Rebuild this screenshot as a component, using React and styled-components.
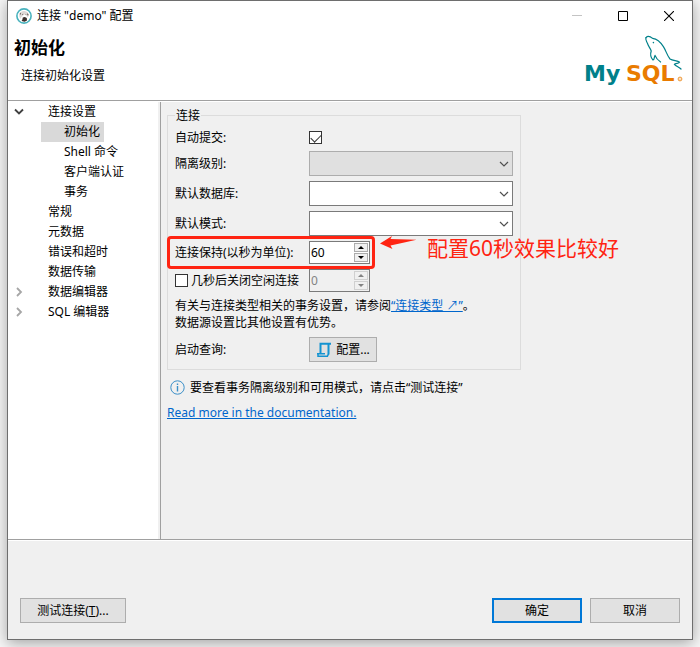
import React, { useState } from 'react';
import styled, { createGlobalStyle } from 'styled-components'

const FONT = '"Noto Sans", "Noto Sans CJK SC", sans-serif'

const TREE = [
    { id: 'conn', label: '连接设置', arrow: 'open', level: 0 },
    { id: 'init', label: '初始化', level: 1 },
    { id: 'shell', label: 'Shell 命令', level: 1 },
    { id: 'auth', label: '客户端认证', level: 1 },
    { id: 'tx', label: '事务', level: 1 },
    { id: 'general', label: '常规', level: 0 },
    { id: 'meta', label: '元数据', level: 0 },
    { id: 'errors', label: '错误和超时', level: 0 },
    { id: 'transfer', label: '数据传输', level: 0 },
    { id: 'dataeditor', label: '数据编辑器', arrow: 'closed', level: 0 },
    { id: 'sqleditor', label: 'SQL 编辑器', arrow: 'closed', level: 0 },
]

const AppIcon = () => (
    <svg width="16" height="16" viewBox="0 0 16 16" aria-hidden="true">
        <circle cx="8" cy="8" r="7.1" fill="#fff" stroke="#48b2bd" strokeWidth="1.6" />
        <path d="M3.2 6.4C3.8 4 6 2.8 8.4 3C11 3.2 12.8 5 12.8 7.4L11.6 9.6L10.4 7.4L8.6 6.4L7 7.6L5 9.6L4.6 11L3.4 9Z" fill="#ddd8d6" />
        <path d="M6.8 9.6L8.8 9L10.8 10L11 12.6L8.6 13.8L5.6 13L6.4 11.4Z" fill="#3b302d" />
        <path d="M3.6 6L5 4.6L4.6 6.8Z M11 5L12.8 7L11.6 7.6Z M6 6.2L7.2 5.8L7 7Z M9.4 6.2L10.4 6.4L10 7.2Z" fill="#4b403c" />
    </svg>
)

const MySqlLogo = () => (
    <svg width="100" height="56" viewBox="0 0 100 56" role="img" aria-label="MySQL">
        <g fill="none" stroke="#00808a" strokeWidth="1.2" strokeLinejoin="round" strokeLinecap="round">
            <path d="M62 2.6C63.6 0.8 66.4 1.6 68.6 3.4C73 4 76.8 7.6 79.4 11.6C82 15.6 83 20.4 86 24C89 25.8 93.4 25.6 95.6 27.2C95.2 28.8 91.4 28 90.4 29.4C92 31.4 95 32 97 34" />
            <path d="M62 2.6C61 4.6 62.6 6.2 63.4 8.2C64 11 66.4 13 67.2 16C66.2 19 66.8 22.6 69 25C70.4 25.2 70 22.4 71 20.4C72 23 74 25.4 76.6 27" />
        </g>
        <circle cx="69.4" cy="7.6" r="0.8" fill="#00808a" />
        <LogoText x="0" y="46" fill="#00808a">My</LogoText>
        <LogoText x="42" y="46" fill="#e97b00">SQL</LogoText>
        <circle cx="96" cy="44" r="1.9" fill="none" stroke="#e97b00" strokeWidth="0.8" />
        <circle cx="96" cy="44" r="0.6" fill="#e97b00" />
    </svg>
)

const Chevron = () => (
    <svg width="10" height="6" viewBox="0 0 10 6" aria-hidden="true">
        <path d="M1 1L5 5L9 1" fill="none" stroke="#505050" strokeWidth="1.2" />
    </svg>
)

const ComboBox = ({ id, disabled }) => (
    <Combo>
        <select id={id} disabled={disabled} defaultValue="">
            <option value=""></option>
        </select>
        <Chevron />
    </Combo>
)

const SpinBox = ({ id, label, initial, disabled }) => {
    const [value, setValue] = useState(initial)
    return (
        <Spin $disabled={disabled}>
            <input id={id} type="number" aria-label={label} value={value} disabled={disabled} onChange={(e) => setValue(e.target.value)} />
            <SpinArrows>
                <SpinButton type="button" aria-label="增加" disabled={disabled} onClick={() => setValue(Number(value) + 1)}>
                    <svg width="6" height="3" viewBox="0 0 6 3"><path d="M0 3L3 0L6 3Z" fill="currentColor" /></svg>
                </SpinButton>
                <SpinButton type="button" aria-label="减少" disabled={disabled} onClick={() => setValue(Number(value) - 1)}>
                    <svg width="6" height="3" viewBox="0 0 6 3"><path d="M0 0L3 3L6 0Z" fill="currentColor" /></svg>
                </SpinButton>
            </SpinArrows>
        </Spin>
    )
}

const TitleBar = () => (
    <Bar>
        <AppIcon />
        <span>连接 "demo" 配置</span>
        <WindowButtons>
            <button type="button" aria-label="最小化" disabled>
                <svg width="10" height="10" viewBox="0 0 10 10"><path d="M0 4.5H10" stroke="#c4c4c4" /></svg>
            </button>
            <button type="button" aria-label="最大化">
                <svg width="10" height="10" viewBox="0 0 10 10"><path d="M0.5 0.5H9.5V9.5H0.5Z" fill="none" stroke="#000" /></svg>
            </button>
            <button type="button" aria-label="关闭">
                <svg width="10" height="10" viewBox="0 0 10 10"><path d="M0 0L10 10M10 0L0 10" stroke="#000" strokeWidth="1.1" /></svg>
            </button>
        </WindowButtons>
    </Bar>
)

const SettingsTree = () => {
    const [selected, setSelected] = useState('init')
    return (
        <Tree>
            {TREE.map(t => (
                <TreeRow key={t.id}>
                    <TreeArrow>
                        {t.arrow === 'open' && (
                            <svg width="10" height="8" viewBox="0 0 10 8"><path d="M1 1.5L5 5.5L9 1.5" fill="none" stroke="#404040" strokeWidth="1.8" /></svg>
                        )}
                        {t.arrow === 'closed' && (
                            <svg width="10" height="10" viewBox="0 0 10 10"><path d="M3 1L7 5L3 9" fill="none" stroke="#a6a6a6" strokeWidth="1.8" /></svg>
                        )}
                    </TreeArrow>
                    <TreeItem type="button" $level={t.level} $selected={selected === t.id} onClick={() => setSelected(t.id)}>
                        {t.label}
                    </TreeItem>
                </TreeRow>
            ))}
        </Tree>
    )
}

const ConnectionGroup = () => (
    <Group>
        <legend>连接</legend>
        <Rows>
            <Row $short>
                <label htmlFor="autocommit">自动提交:</label>
                <CheckBox id="autocommit" type="checkbox" defaultChecked />
            </Row>
            <Row>
                <label htmlFor="isolation">隔离级别:</label>
                <ComboBox id="isolation" disabled />
            </Row>
            <Row>
                <label htmlFor="database">默认数据库:</label>
                <ComboBox id="database" />
            </Row>
            <Row>
                <label htmlFor="schema">默认模式:</label>
                <ComboBox id="schema" />
            </Row>
            <Row>
                <label htmlFor="keepalive">连接保持(以秒为单位):</label>
                <SpinBox id="keepalive" initial="60" />
                <Highlight />
                <Note>
                    <svg width="37" height="14" viewBox="0 0 37 14" aria-hidden="true">
                        <path d="M0 7.5L12 0L10.5 3L36.5 3.8L22 7L10.5 9.5L12.5 13Z" fill="#ff2412" />
                    </svg>
                    <span>配置60秒效果比较好</span>
                </Note>
            </Row>
            <Row>
                <CheckLabel>
                    <CheckBox type="checkbox" />
                    几秒后关闭空闲连接
                </CheckLabel>
                <SpinBox id="idle" label="几秒后关闭空闲连接" initial="0" disabled />
            </Row>
            <Hint>
                有关与连接类型相关的事务设置，请参阅<Link href="#types">“连接类型 ↗”</Link>。<br />
                数据源设置比其他设置有优势。
            </Hint>
            <Row>
                <span>启动查询:</span>
                <ConfigButton type="button">
                    <svg width="16" height="16" viewBox="0 0 16 16" aria-hidden="true">
                        <path d="M4.5 5V1.8H15M12.5 1.8V12.5M4.5 4V11.5" fill="none" stroke="#1493d1" strokeWidth="2" />
                        <path d="M1 11.8H9M2 11.8V14.2H11.4L12.5 12" fill="none" stroke="#1493d1" strokeWidth="1.5" />
                    </svg>
                    配置...
                </ConfigButton>
            </Row>
        </Rows>
    </Group>
)

const App = () => (
    <Page>
        <GlobalStyle />
        <Dialog>
            <TitleBar />
            <Header>
                <div>
                    <h1>初始化</h1>
                    <p>连接初始化设置</p>
                </div>
                <MySqlLogo />
            </Header>
            <Body>
                <SettingsTree />
                <Content>
                    <ConnectionGroup />
                    <Info>
                        <svg width="15" height="15" viewBox="0 0 15 15" aria-hidden="true">
                            <circle cx="7.5" cy="7.5" r="6.7" fill="none" stroke="#3a8fc8" strokeWidth="1" />
                            <path d="M7.5 6V11.5M7.5 3.5V5" stroke="#3a8fc8" strokeWidth="1.4" />
                        </svg>
                        要查看事务隔离级别和可用模式，请点击“测试连接”
                    </Info>
                    <Link href="#docs">Read more in the documentation.</Link>
                </Content>
            </Body>
            <Footer>
                <Button type="button" $wide>测试连接(<u>T</u>)...</Button>
                <ButtonGroup>
                    <Button type="button" $primary>确定</Button>
                    <Button type="button">取消</Button>
                </ButtonGroup>
            </Footer>
        </Dialog>
    </Page>
)

export default App

const GlobalStyle = createGlobalStyle`
* { box-sizing: border-box; }
body {
    margin: 0;
    background: #f7f7f7;
    color: #000;
    font-family: ${FONT};
    font-size: 12px;
    line-height: 17px;
}
button, input, select { font: inherit; color: inherit; }
svg { display: block; flex: none; }
`
const Page = styled.div`
display: flex;
min-height: 100vh;
padding: 0 7px 7px;
`
const Dialog = styled.main`
display: flex;
flex-direction: column;
flex: 1;
min-width: 0;
border: 1px solid #6e6e6e;
background: #f0f0f0;
box-shadow: 0 3px 14px rgba(0, 0, 0, 0.35);
`
const Bar = styled.div`
display: flex;
align-items: center;
gap: 5px;
height: 29px;
padding-left: 8px;
background: #fff;
`
const WindowButtons = styled.div`
display: flex;
margin-left: auto;
button {
    display: flex;
    align-items: center;
    justify-content: center;
    width: 46px;
    height: 29px;
    padding: 0;
    border: 0;
    background: none;
}
`
const Header = styled.header`
display: flex;
justify-content: space-between;
height: 71px;
padding: 5px 8px 0 6px;
border-bottom: 1px solid #a0a0a0;
background: #fff;
h1 {
    margin: 0;
    padding-top: 1px;
    font-size: 17px;
    line-height: 24px;
}
p {
    margin: 7px 0 0 7px;
}
`
const LogoText = styled.text`
font-family: "DejaVu Sans", sans-serif;
font-size: 22px;
font-weight: bold;
`
const Body = styled.div`
display: flex;
flex: 1;
border-top: 1px solid #fff;
border-bottom: 1px solid #a0a0a0;
`
const Tree = styled.ul`
flex: 0 0 150px;
margin: 0;
padding: 0;
list-style: none;
background: #fff;
`
const TreeRow = styled.li`
display: flex;
height: 20px;
`
const TreeArrow = styled.span`
display: flex;
align-items: center;
width: 33px;
padding-left: 6px;
`
const TreeItem = styled.button`
padding: 0 4px 0 ${p => p.$level ? '23px' : '7px'};
border: 0;
background: ${p => p.$selected ? '#d9d9d9' : 'none'};
line-height: 20px;
white-space: nowrap;
`
const Content = styled.section`
flex: 1;
min-width: 0;
margin-left: 2px;
padding: 5px 6px;
border-left: 1px solid #a0a0a0;
`
const Group = styled.fieldset`
width: 354px;
margin: 0;
padding: 5px 7px 7px;
border: 1px solid #dcdcdc;
legend {
    padding: 0 1px;
}
`
const Rows = styled.div`
display: flex;
flex-direction: column;
gap: 5px;
`
const Row = styled.div`
position: relative;
display: grid;
grid-template-columns: 134px 1fr;
align-items: center;
justify-items: start;
min-height: ${p => p.$short ? '17px' : '23px'};
white-space: nowrap;
`
const CheckBox = styled.input`
appearance: none;
flex: none;
width: 13px;
height: 13px;
margin: 0;
border: 1px solid #333;
background: #fff;
&:checked::before {
    content: '';
    display: block;
    width: 5px;
    height: 9px;
    margin: 0 0 0 3px;
    border: solid #333;
    border-width: 0 1px 1px 0;
    transform: rotate(45deg);
}
`
const CheckLabel = styled.label`
display: flex;
align-items: center;
gap: 3px;
`
const Combo = styled.div`
position: relative;
width: 100%;
height: 25px;
select {
    appearance: none;
    display: block;
    width: 100%;
    height: 100%;
    border: 1px solid #7a7a7a;
    border-radius: 0;
    background: #fff;
}
select:disabled {
    border-color: #adadad;
    background: #e0e0e0;
    opacity: 1;
}
svg {
    position: absolute;
    top: 10px;
    right: 4px;
    pointer-events: none;
}
`
const Spin = styled.div`
display: flex;
width: 61px;
height: 23px;
border: 1px solid #7a7a7a;
background: ${p => p.$disabled ? '#f0f0f0' : '#fff'};
color: ${p => p.$disabled ? '#838383' : '#000'};
input {
    appearance: textfield;
    flex: 1;
    min-width: 0;
    padding: 0 1px;
    border: 0;
    background: none;
}
input::-webkit-inner-spin-button {
    appearance: none;
}
`
const SpinArrows = styled.div`
display: flex;
flex-direction: column;
gap: 1px;
padding: 1px;
`
const SpinButton = styled.button`
display: flex;
flex: 1;
align-items: center;
justify-content: center;
width: 14px;
min-height: 0;
padding: 0;
border: 1px solid ${p => p.disabled ? '#d0d0d0' : '#acacac'};
background: #f0f0f0;
`
const Highlight = styled.div`
position: absolute;
top: -5px;
right: 138px;
bottom: -5px;
left: -8px;
border: 3px solid #ff2412;
border-radius: 4px;
pointer-events: none;
`
const Note = styled.div`
position: absolute;
top: -8px;
left: 205px;
display: flex;
gap: 10px;
color: #ff2412;
font-size: 21px;
line-height: 30px;
svg {
    margin-top: 3px;
}
`
const Hint = styled.p`
margin: 0;
padding-bottom: 1px;
white-space: nowrap;
`
const Link = styled.a`
color: #0066cc;
text-decoration: underline;
`
const Info = styled.p`
display: flex;
align-items: center;
gap: 5px;
margin: 9px 0 8px 3px;
`
const Button = styled.button`
width: ${p => p.$wide ? '106px' : '90px'};
height: 25px;
padding: 0;
border: ${p => p.$primary ? '2px solid #0078d7' : '1px solid #adadad'};
background: #e1e1e1;
white-space: nowrap;
`
const ConfigButton = styled(Button)`
display: flex;
align-items: center;
justify-content: center;
gap: 4px;
width: 68px;
`
const Footer = styled.footer`
display: flex;
justify-content: space-between;
padding: 57px 12px 16px;
border-top: 1px solid #fff;
`
const ButtonGroup = styled.div`
display: flex;
gap: 8px;
`
